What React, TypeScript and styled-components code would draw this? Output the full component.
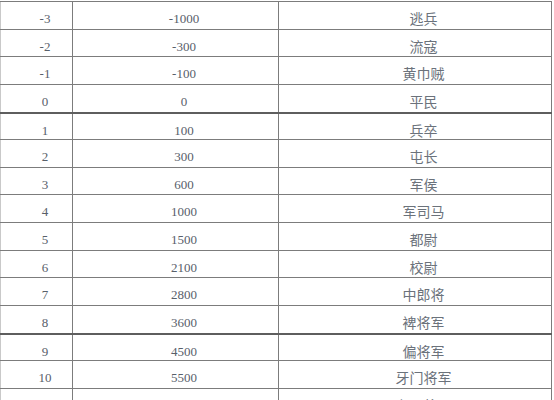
import React from "react";
import styled, { createGlobalStyle } from "styled-components";

const Global = createGlobalStyle`
  html, body { margin: 0; padding: 0; background: #ffffff; }
  body { width: 554px; height: 400px; overflow: hidden; }
`;

const Table = styled.div`
  margin-top: 1px;
  width: 552px;
  display: flex;
  flex-direction: column;
  color: #58606a;
`;

const Row = styled.div<{ $thick?: boolean }>`
  box-sizing: border-box;
  height: 27.64px;
  flex: none;
  display: grid;
  grid-template-columns: 72px 206px 274px;
  border-top: ${(p) => (p.$thick ? "2px solid #5e5e5e" : "1px solid #7c7c7c")};
`;

const Cell = styled.div<{ $col: number; $cjk?: boolean }>`
  box-sizing: border-box;
  padding-left: 17px;
  padding-top: ${(p) => (p.$cjk ? 8 : 9)}px;
  text-align: center;
  font-family: ${(p) =>
    p.$cjk
      ? '"Noto Sans CJK SC", sans-serif'
      : '"Liberation Serif", "DejaVu Serif", serif'};
  font-size: ${(p) => (p.$cjk ? "14px" : "13px")};
  color: ${(p) => (p.$cjk ? "#6b727b" : "#58606a")};
  line-height: 16px;
  white-space: nowrap;
  overflow: hidden;
  border-left: 1px solid ${(p) => (p.$col === 0 ? "#c9c9c9" : "#7c7c7c")};
  border-right: ${(p) => (p.$col === 2 ? "1px solid #7c7c7c" : "none")};
`;

const rows: [string, string, string][] = [
  ["-3", "-1000", "逃兵"],
  ["-2", "-300", "流寇"],
  ["-1", "-100", "黄巾贼"],
  ["0", "0", "平民"],
  ["1", "100", "兵卒"],
  ["2", "300", "屯长"],
  ["3", "600", "军侯"],
  ["4", "1000", "军司马"],
  ["5", "1500", "都尉"],
  ["6", "2100", "校尉"],
  ["7", "2800", "中郎将"],
  ["8", "3600", "裨将军"],
  ["9", "4500", "偏将军"],
  ["10", "5500", "牙门将军"],
  ["11", "6600", "杂号将军"],
];

export default function App() {
  return (
    <>
      <Global />
      <Table>
        {rows.map(([lv, exp, title]) => (
          <Row key={lv} $thick={lv === "1" || lv === "9"}>
            <Cell $col={0}>{lv}</Cell>
            <Cell $col={1}>{exp}</Cell>
            <Cell $col={2} $cjk>
              {title}
            </Cell>
          </Row>
        ))}
      </Table>
    </>
  );
}
